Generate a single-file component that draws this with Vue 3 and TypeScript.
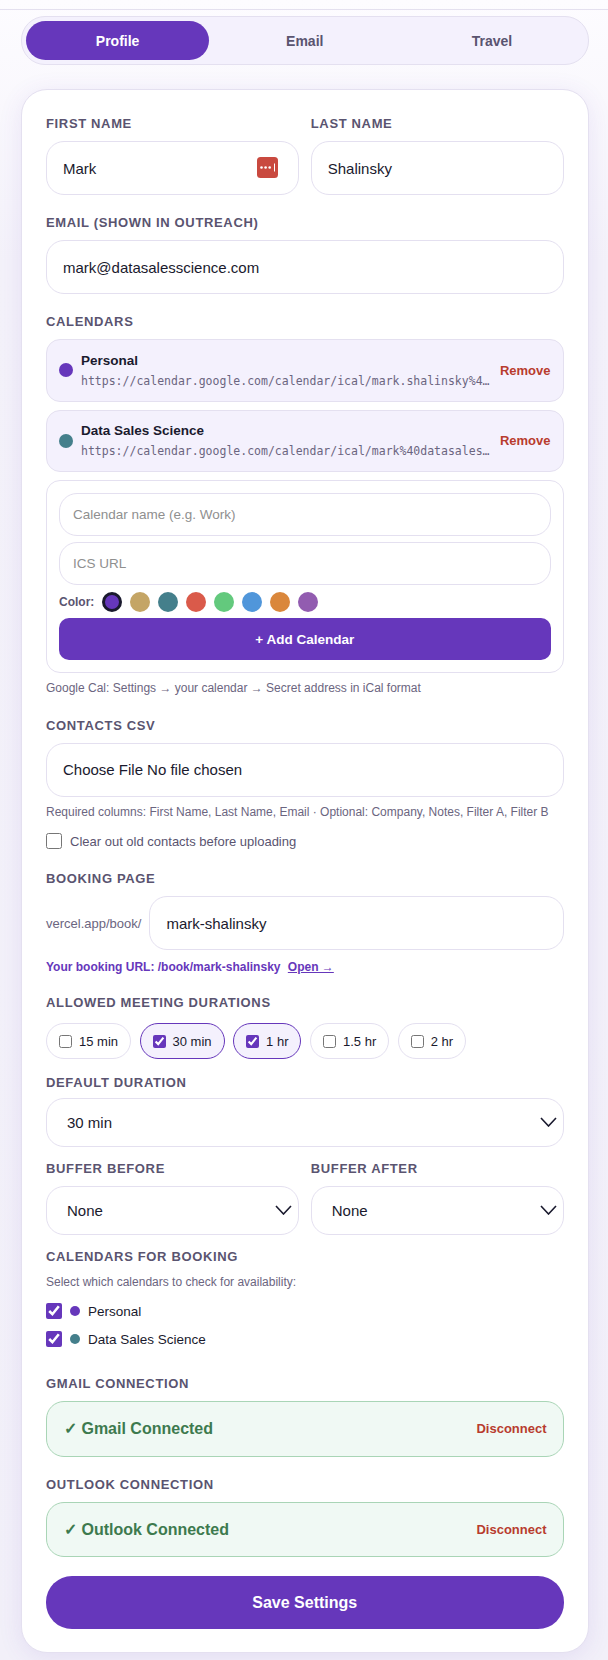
<template>
  <div class="page">
    <div class="topbar"></div>

    <div class="tabs">
      <button v-for="tab in tabs" :key="tab" class="tab" :class="{ active: tab === 'Profile' }">{{ tab }}</button>
    </div>

    <div class="card">
      <div class="two-col first">
        <div>
          <label class="label">First Name</label>
          <div class="has-icon">
            <input class="input" type="text" value="Mark" />
            <svg class="pw-icon" width="21" height="21" viewBox="0 0 21 21">
              <rect width="21" height="21" rx="3.5" fill="#c9493f" />
              <circle cx="4.5" cy="10.5" r="1.3" fill="#fff" />
              <circle cx="8.6" cy="10.5" r="1.3" fill="#fff" />
              <circle cx="12.7" cy="10.5" r="1.3" fill="#fff" />
              <rect x="17" y="6.5" width="1" height="8" fill="#fff" />
            </svg>
          </div>
        </div>
        <div>
          <label class="label">Last Name</label>
          <input class="input" type="text" value="Shalinsky" />
        </div>
      </div>

      <label class="label gap-20">Email (shown in outreach)</label>
      <input class="input" type="text" value="mark@datasalesscience.com" />

      <label class="label gap-20">Calendars</label>
      <div v-for="cal in calendars" :key="cal.name" class="cal-item">
        <span class="cal-dot" :style="{ background: cal.color }"></span>
        <div class="cal-info">
          <div class="cal-name">{{ cal.name }}</div>
          <div class="cal-url">{{ cal.url }}</div>
        </div>
        <span class="remove">Remove</span>
      </div>

      <div class="add-box">
        <input class="input small" type="text" placeholder="Calendar name (e.g. Work)" />
        <input class="input small" type="text" placeholder="ICS URL" />
        <div class="color-row">
          <span class="color-label">Color:</span>
          <span
            v-for="(c, i) in swatches"
            :key="c"
            class="swatch"
            :class="{ picked: i === 0 }"
            :style="{ background: c }"
          ></span>
        </div>
        <button class="add-btn">+ Add Calendar</button>
      </div>
      <div class="help help-cal">Google Cal: Settings → your calendar → Secret address in iCal format</div>

      <label class="label gap-22">Contacts CSV</label>
      <input class="input file" type="file" />
      <div class="help help-csv">Required columns: First Name, Last Name, Email · Optional: Company, Notes, Filter A, Filter B</div>
      <label class="check-row clear-row">
        <input type="checkbox" class="check" />
        <span>Clear out old contacts before uploading</span>
      </label>

      <label class="label gap-22">Booking Page</label>
      <div class="slug-row">
        <span class="prefix">vercel.app/book/</span>
        <input class="input" type="text" value="mark-shalinsky" />
      </div>
      <div class="booking-url">Your booking URL: /book/mark-shalinsky <a class="open" href="#">Open →</a></div>

      <label class="label gap-20 pills-label">Allowed Meeting Durations</label>
      <div class="pills">
        <label v-for="d in durations" :key="d.text" class="pill" :class="{ on: d.on }">
          <input type="checkbox" class="pill-check" :checked="d.on" />
          {{ d.text }}
        </label>
      </div>

      <label class="label gap-16 tight">Default Duration</label>
      <div class="select-wrap">
        <select class="select"><option>30 min</option></select>
        <svg class="chevron" width="17" height="10" viewBox="0 0 17 10"><path d="M1 1l7.5 8L16 1" fill="none" stroke="#1a1a2e" stroke-width="1.6" /></svg>
      </div>

      <div class="two-col gap-14">
        <div>
          <label class="label">Buffer Before</label>
          <div class="select-wrap">
            <select class="select"><option>None</option></select>
            <svg class="chevron" width="17" height="10" viewBox="0 0 17 10"><path d="M1 1l7.5 8L16 1" fill="none" stroke="#1a1a2e" stroke-width="1.6" /></svg>
          </div>
        </div>
        <div>
          <label class="label">Buffer After</label>
          <div class="select-wrap">
            <select class="select"><option>None</option></select>
            <svg class="chevron" width="17" height="10" viewBox="0 0 17 10"><path d="M1 1l7.5 8L16 1" fill="none" stroke="#1a1a2e" stroke-width="1.6" /></svg>
          </div>
        </div>
      </div>

      <label class="label gap-14">Calendars for Booking</label>
      <div class="help">Select which calendars to check for availability:</div>
      <label v-for="cal in calendars" :key="cal.name + 'b'" class="check-row book-row">
        <input type="checkbox" class="check" checked />
        <span class="mini-dot" :style="{ background: cal.color }"></span>
        <span class="book-name">{{ cal.name }}</span>
      </label>

      <label class="label gmail-label">Gmail Connection</label>
      <div class="connected">
        <span class="conn-text">✓ Gmail Connected</span>
        <span class="disconnect">Disconnect</span>
      </div>

      <label class="label gap-20">Outlook Connection</label>
      <div class="connected">
        <span class="conn-text">✓ Outlook Connected</span>
        <span class="disconnect">Disconnect</span>
      </div>

      <button class="save">Save Settings</button>
    </div>
  </div>
</template>

<script setup lang="ts">
const tabs = ['Profile', 'Email', 'Travel'];

const calendars = [
  {
    name: 'Personal',
    color: '#6637bb',
    url: 'https://calendar.google.com/calendar/ical/mark.shalinsky%40gmail.com/private-abc123/basic.ics',
  },
  {
    name: 'Data Sales Science',
    color: '#447f8b',
    url: 'https://calendar.google.com/calendar/ical/mark%40datasalesscience.com/private-def456/basic.ics',
  },
];

const swatches = ['#6637bb', '#c4a565', '#447f8b', '#da5a4a', '#63c97d', '#5096da', '#da873b', '#925cb0'];

const durations = [
  { text: '15 min', on: false },
  { text: '30 min', on: true },
  { text: '1 hr', on: true },
  { text: '1.5 hr', on: false },
  { text: '2 hr', on: false },
];
</script>

<style>
body {
  margin: 0;
  background: #f3f1f9;
}
</style>

<style scoped>
.page {
  box-sizing: border-box;
  width: 608px;
  height: 1660px;
  padding: 0 19.5px 0 21px;
  overflow: hidden;
  font-family: "Liberation Sans", Arial, sans-serif;
  color: #1a1a2e;
  background: linear-gradient(180deg, #fdfcff 0, #f4f2fa 260px, #f2f0f9 100%);
}

.topbar {
  height: 9px;
  margin: 0 -20px 6px -22px;
  border-bottom: 1px solid #e4e0ef;
}

.tabs {
  display: flex;
  gap: 4px;
  height: 49px;
  box-sizing: border-box;
  padding: 4px;
  border: 1px solid #e4e0f0;
  border-radius: 24px;
  background: #f4f1fd;
}

.tab {
  flex: 1;
  border: 0;
  border-radius: 20px;
  background: none;
  font: bold 14px "Liberation Sans", Arial, sans-serif;
  color: #5a5470;
}

.tab.active {
  background: #6637bb;
  color: #fff;
}

.card {
  margin-top: 24px;
  height: 1564px;
  box-sizing: border-box;
  padding: 26px 24px 24px;
  border: 1px solid #e4e0f0;
  border-radius: 26px;
  background: #fff;
  box-shadow: 0 4px 24px rgba(102, 55, 187, 0.1);
}

.label {
  display: block;
  height: 16px;
  margin-bottom: 9px;
  font-size: 13px;
  line-height: 16px;
  font-weight: bold;
  letter-spacing: 0.65px;
  text-transform: uppercase;
  color: #5a5470;
}

.gap-14 { margin-top: 14px; }
.gap-16 { margin-top: 16px; }
.gap-20 { margin-top: 20px; }
.gap-22 { margin-top: 22px; }
.tight { margin-bottom: 7px; }
.pills-label { margin-bottom: 12px; }
.gmail-label { margin-top: 29px; }

.two-col {
  display: grid;
  grid-template-columns: 1fr 1fr;
  gap: 12px;
}

.has-icon,
.select-wrap {
  position: relative;
}

.pw-icon {
  position: absolute;
  top: 16px;
  right: 21px;
}

.input {
  display: block;
  width: 100%;
  height: 54px;
  box-sizing: border-box;
  padding: 0 16px;
  border: 1px solid #e4e0f0;
  border-radius: 18px;
  background: #fff;
  font: 15px "Liberation Sans", Arial, sans-serif;
  color: #1a1a2e;
  outline: none;
}

.input.small {
  height: 43px;
  padding: 0 13px;
  font-size: 13.5px;
}

.input::placeholder {
  color: #8f8f8f;
}

.file {
  padding: 17px 16px;
}

.file::file-selector-button {
  margin: 0 4px 0 0;
  padding: 0;
  border: 0;
  background: none;
  font: inherit;
  color: inherit;
}

.cal-item {
  display: flex;
  align-items: center;
  gap: 8px;
  height: 62.5px;
  box-sizing: border-box;
  margin-bottom: 8px;
  padding: 0 12px 0 12px;
  border: 1px solid #e4e0f0;
  border-radius: 14px;
  background: #f4f1fd;
}

.cal-dot {
  flex: none;
  width: 14px;
  height: 14px;
  border-radius: 50%;
}

.cal-info {
  flex: 1;
  min-width: 0;
}

.cal-name {
  font-size: 13.5px;
  line-height: 18px;
  font-weight: bold;
}

.cal-url {
  margin-top: 3px;
  overflow: hidden;
  white-space: nowrap;
  text-overflow: ellipsis;
  font: 11.5px/16px "DejaVu Sans Mono", monospace;
  color: #6b6580;
}

.remove {
  flex: none;
  font-size: 13px;
  font-weight: bold;
  color: #b83c2e;
}

.add-box {
  display: flex;
  flex-direction: column;
  gap: 6.5px;
  height: 193px;
  box-sizing: border-box;
  padding: 12px;
  border: 1px solid #e4e0f0;
  border-radius: 14px;
}

.color-row {
  display: flex;
  align-items: center;
  gap: 8px;
}

.color-label {
  font-size: 12px;
  font-weight: bold;
  color: #5a5470;
}

.swatch {
  width: 20px;
  height: 20px;
  box-sizing: border-box;
  border-radius: 50%;
}

.swatch.picked {
  border: 3px solid #1a1a2e;
}

.add-btn {
  height: 42px;
  border: 0;
  border-radius: 10px;
  background: #6637bb;
  font: bold 13.5px "Liberation Sans", Arial, sans-serif;
  color: #fff;
}

.help {
  font-size: 12px;
  line-height: 16px;
  color: #6b6580;
}

.help-cal { margin-top: 7px; }
.help-csv { margin-top: 7px; }

.check-row {
  display: flex;
  align-items: center;
  height: 16px;
  font-size: 13px;
}

.clear-row {
  margin-top: 13px;
  gap: 8px;
  color: #5a5470;
}

.book-row {
  margin-top: 12px;
  font-size: 13.5px;
  color: #1a1a2e;
}

.help + .book-row {
  margin-top: 13px;
}

.check {
  width: 16px;
  height: 16px;
  margin: 0;
  accent-color: #6637bb;
}

.mini-dot {
  width: 10px;
  height: 10px;
  margin: 0 8px;
  border-radius: 50%;
}

.slug-row {
  display: flex;
  align-items: center;
  gap: 8px;
}

.slug-row .input {
  flex: 1;
  min-width: 0;
}

.prefix {
  flex: none;
  font-size: 13px;
  color: #6b6580;
}

.booking-url {
  margin-top: 9px;
  font-size: 12px;
  line-height: 16px;
  font-weight: bold;
  color: #6637bb;
}

.open {
  margin-left: 4px;
  color: #6637bb;
}

.pills {
  display: flex;
  gap: 8.5px;
}

.pill {
  display: flex;
  align-items: center;
  gap: 7px;
  height: 36px;
  box-sizing: border-box;
  padding: 0 12px;
  border: 1px solid #e4e0f0;
  border-radius: 18px;
  font-size: 13px;
  color: #1a1a2e;
}

.pill.on {
  border-color: #6637bb;
  background: #f4f1fd;
}

.pill-check {
  width: 13px;
  height: 13px;
  margin: 0;
  accent-color: #6637bb;
}

.select {
  display: block;
  width: 100%;
  height: 49px;
  box-sizing: border-box;
  padding: 0 20px;
  border: 1px solid #e4e0f0;
  border-radius: 18px;
  appearance: none;
  background: #fff;
  font: 15px "Liberation Sans", Arial, sans-serif;
  color: #1a1a2e;
  outline: none;
}

.chevron {
  position: absolute;
  top: 19px;
  right: 7px;
  pointer-events: none;
}

.connected {
  display: flex;
  align-items: center;
  justify-content: space-between;
  height: 55.5px;
  box-sizing: border-box;
  padding: 0 16px 0 17px;
  border: 1px solid #a9d5b6;
  border-radius: 18px;
  background: #f0f9f4;
}

.conn-text {
  font-size: 16px;
  font-weight: bold;
  color: #3d7a4e;
}

.disconnect {
  font-size: 13px;
  font-weight: bold;
  color: #b83c2e;
}

.save {
  display: block;
  width: 100%;
  height: 53px;
  margin-top: 19px;
  border: 0;
  border-radius: 26px;
  background: #6637bb;
  font: bold 16px "Liberation Sans", Arial, sans-serif;
  color: #fff;
}
</style>
